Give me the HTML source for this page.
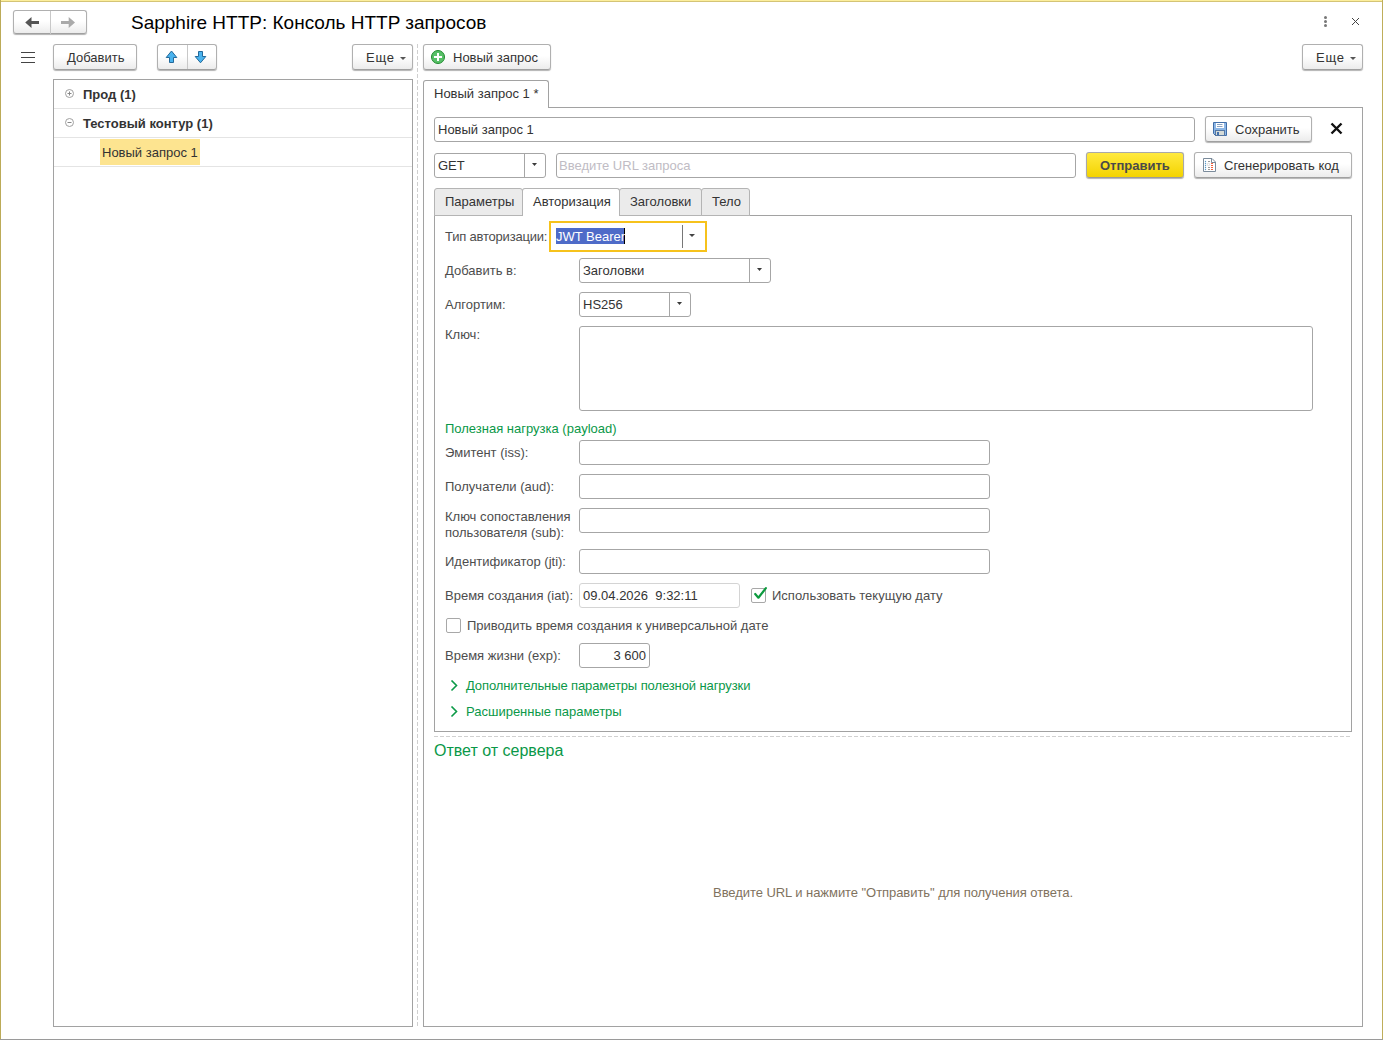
<!DOCTYPE html>
<html><head><meta charset="utf-8">
<style>
*{box-sizing:border-box;margin:0;padding:0}
html,body{width:1383px;height:1040px;overflow:hidden;background:#fff}
body{position:relative;font-family:"Liberation Sans",sans-serif;font-size:13px;color:#333}
.a{position:absolute}
.t{position:absolute;white-space:nowrap;line-height:16px;padding-top:1px}
.btn{position:absolute;height:26px;border:1px solid #b0b0b0;border-bottom-color:#a0a0a0;border-radius:3px;background:linear-gradient(#fff 0%,#fff 45%,#ececec 100%);box-shadow:0 1px 1px rgba(0,0,0,.3)}
.inp{position:absolute;height:25px;border:1px solid #a6a6a6;border-radius:3px;background:#fff}
.lbl{position:absolute;white-space:nowrap;line-height:16px;color:#4d4d4d;padding-top:1px}
.grn{color:#0a9848}
.dd{position:absolute;top:0;bottom:0;width:21px;border-left:1px solid #a6a6a6}
.dd:after{content:"";position:absolute;left:7px;top:9px;width:5px;height:3px;background:#3a3a3a;clip-path:polygon(0 0,100% 0,50% 100%)}
.tri{position:absolute;width:0;height:0;border-left:3px solid transparent;border-right:3px solid transparent;border-top:3px solid #555}
</style></head><body>
<!-- window frame -->
<div class="a" style="left:0;top:0;width:1383px;height:1px;background:#fcee9c"></div><div class="a" style="left:0;top:1px;width:1383px;height:1px;background:#d4c476"></div>
<div class="a" style="left:0;top:0;width:1px;height:1040px;background:#bcab58"></div>
<div class="a" style="left:1382px;top:0;width:1px;height:1040px;background:#bfae5a"></div>
<div class="a" style="left:0;top:1039px;width:1383px;height:1px;background:#9a9a9a"></div>

<!-- header -->
<div class="btn" style="left:13px;top:10px;width:74px;height:24px"></div>
<div class="a" style="left:50px;top:11px;width:1px;height:23px;background:#c8c8c8"></div>
<svg class="a" style="left:24px;top:16px" width="16" height="13" viewBox="0 0 16 13"><path d="M1.2 6.5 L7.5 1 L7.5 5 L15 5 L15 8 L7.5 8 L7.5 12 Z" fill="#555"/></svg>
<svg class="a" style="left:60px;top:16px" width="16" height="13" viewBox="0 0 16 13"><path d="M15 6.5 L8.7 1 L8.7 5 L1 5 L1 8 L8.7 8 L8.7 12 Z" fill="#aaa"/></svg>
<div class="t" style="left:131px;top:11px;font-size:19px;line-height:22px;color:#000">Sapphire HTTP: Консоль HTTP запросов</div>
<svg class="a" style="left:1320px;top:14px" width="11" height="16"><circle cx="5.5" cy="3.4" r="1.5" fill="#777"/><circle cx="5.5" cy="7.4" r="1.5" fill="#777"/><circle cx="5.5" cy="11.5" r="1.5" fill="#777"/></svg>
<svg class="a" style="left:1351px;top:17px" width="10" height="10"><path d="M1 1L8 8M8 1L1 8" stroke="#444" stroke-width="1"/></svg>

<!-- toolbar -->
<div class="a" style="left:21px;top:52px;width:14px;height:1px;background:#444"></div>
<div class="a" style="left:21px;top:57px;width:14px;height:1px;background:#444"></div>
<div class="a" style="left:21px;top:62px;width:14px;height:1px;background:#444"></div>
<div class="btn" style="left:53px;top:44px;width:84px"><div class="t" style="left:13px;top:4px">Добавить</div></div>
<div class="btn" style="left:157px;top:44px;width:60px"></div>
<div class="a" style="left:187px;top:45px;width:1px;height:24px;background:#c8c8c8"></div>
<svg class="a" style="left:164px;top:49px" width="15" height="16" viewBox="0 0 15 16"><path d="M7.5 2 L12.8 8.5 L9.5 8.5 L9.5 13.5 L5.5 13.5 L5.5 8.5 L2.2 8.5 Z" fill="#4ab3ee" stroke="#23699a" stroke-width="1" stroke-linejoin="miter"/></svg><svg class="a" style="left:193px;top:49px" width="15" height="16" viewBox="0 0 15 16"><path d="M5.5 2.5 H9.5 V7.5 H12.8 L7.5 13.8 L2.2 7.5 H5.5 Z" fill="#4ab3ee" stroke="#23699a" stroke-width="1"/></svg>
<div class="btn" style="left:352px;top:44px;width:61px"><div class="t" style="left:13px;top:4px;letter-spacing:0.8px">Еще</div><div class="tri" style="left:47px;top:12px"></div></div>

<div class="a" style="left:417px;top:44px;width:1px;height:982px;background:repeating-linear-gradient(#cfcfcf 0 4px,transparent 4px 6px)"></div>

<!-- tree -->
<div class="a" style="left:53px;top:79px;width:360px;height:948px;border:1px solid #a2a2a2"></div>
<div class="a" style="left:54px;top:108px;width:358px;height:1px;background:#e4e4e4"></div>
<div class="a" style="left:54px;top:137px;width:358px;height:1px;background:#e4e4e4"></div>
<div class="a" style="left:54px;top:166px;width:358px;height:1px;background:#e4e4e4"></div>
<svg class="a" style="left:65px;top:89px" width="9" height="9"><circle cx="4.5" cy="4.5" r="4" fill="none" stroke="#a0a0a0"/><path d="M2.5 4.5H6.5M4.5 2.5V6.5" stroke="#888"/></svg>
<div class="t" style="left:83px;top:86px;font-weight:bold">Прод (1)</div>
<svg class="a" style="left:65px;top:118px" width="9" height="9"><circle cx="4.5" cy="4.5" r="4" fill="none" stroke="#a0a0a0"/><path d="M2.5 4.5H6.5" stroke="#888"/></svg>
<div class="t" style="left:83px;top:115px;font-weight:bold">Тестовый контур (1)</div>
<div class="a" style="left:100px;top:139px;width:100px;height:26px;background:#fde490"></div>
<div class="t" style="left:102px;top:144px">Новый запрос 1</div>

<!-- right -->
<div class="btn" style="left:423px;top:44px;width:128px"><svg class="a" style="left:7px;top:5px" width="14" height="14" viewBox="0 0 14 14"><circle cx="7" cy="7" r="6.5" fill="#58c068" stroke="#1f8b2e" stroke-width="1"/><rect x="3" y="6" width="8" height="2" fill="#fff"/><rect x="6" y="3" width="2" height="8" fill="#fff"/></svg><div class="t" style="left:29px;top:4px">Новый запрос</div></div>
<div class="btn" style="left:1302px;top:44px;width:61px"><div class="t" style="left:13px;top:4px;letter-spacing:0.8px">Еще</div><div class="tri" style="left:47px;top:12px"></div></div>

<div class="a" style="left:423px;top:107px;width:940px;height:920px;border:1px solid #a2a2a2"></div>
<div class="a" style="left:423px;top:80px;width:126px;height:28px;border:1px solid #a2a2a2;border-bottom:none;border-radius:3px 3px 0 0;background:#fff"></div>
<div class="t" style="left:434px;top:85px">Новый запрос 1 *</div>


<!-- form -->
<div class="inp" style="left:434px;top:117px;width:761px;height:25px"><div class="t" style="left:3px;top:3px">Новый запрос 1</div></div>
<div class="btn" style="left:1205px;top:116px;width:107px;height:26px">
<svg class="a" style="left:7px;top:5px" width="14" height="14" viewBox="0 0 14 14"><path d="M0.5 0.5H13.5V13.5H2.5L0.5 11.5Z" fill="#8cb6e6" stroke="#416ea8"/><rect x="3" y="1" width="8" height="5" fill="#fff"/><path d="M4 2.5H9.5M4 4.5H9.5" stroke="#8aa3c2" stroke-width="1"/><rect x="2.5" y="8.5" width="9" height="5" fill="#d6dbd7" stroke="#5577a3"/><rect x="4" y="10" width="2" height="3" fill="#4672ad"/></svg>
<div class="t" style="left:29px;top:4px">Сохранить</div></div>
<svg class="a" style="left:1330px;top:122px" width="13" height="13" viewBox="0 0 13 13"><path d="M1.5 1.5L11.5 11.5M11.5 1.5L1.5 11.5" stroke="#111" stroke-width="2.4"/></svg>

<div class="inp" style="left:434px;top:153px;width:112px;height:25px"><div class="t" style="left:3px;top:3px">GET</div><div class="dd" style="right:0"></div></div>
<div class="inp" style="left:556px;top:153px;width:520px;height:25px"><div class="t" style="left:2px;top:3px;color:#c0bcc4">Введите URL запроса</div></div>
<div class="btn" style="left:1086px;top:152px;width:98px;height:26px;border-color:#a9a9a9;border-bottom-color:#9a9a9a;background:linear-gradient(#ffea40,#f3d300)"><div class="t" style="left:13px;top:4px;font-weight:bold;color:#4a4a4a">Отправить</div></div>
<div class="btn" style="left:1194px;top:152px;width:158px;height:26px">
<svg class="a" style="left:8px;top:5px" width="13" height="15" viewBox="0 0 13 15"><path d="M0.5 0.5H9L12.5 4V13.5H0.5Z" fill="#fff" stroke="#7b8b9b"/><path d="M8.5 0.5V4.5H12.5" fill="none" stroke="#7b8b9b"/><g fill="#5b9bc9"><circle cx="2.5" cy="3.5" r=".7"/><circle cx="2.5" cy="5.5" r=".7"/><circle cx="2.5" cy="7.5" r=".7"/><circle cx="2.5" cy="9.5" r=".7"/><circle cx="2.5" cy="11.5" r=".7"/></g><path d="M5 3.5H7M5 9.5H7M5 11.5H7" stroke="#9a9a9a"/><circle cx="5.5" cy="6.5" r="1.2" fill="none" stroke="#d0d0d0" stroke-width=".8"/><path d="M8 5.5H10M8 7.5H10M8 9.5H10M8 11.5H10" stroke="#f2613f"/></svg>
<div class="t" style="left:29px;top:4px">Сгенерировать код</div></div>

<!-- inner tabs -->
<div class="a" style="left:434px;top:215px;width:918px;height:517px;border:1px solid #a2a2a2"></div>
<div class="a" style="left:434px;top:188px;width:89px;height:28px;border:1px solid #b4b4b4;border-radius:3px 3px 0 0;background:#ebebeb"></div>
<div class="t" style="left:445px;top:193px">Параметры</div>
<div class="a" style="left:619px;top:188px;width:83px;height:28px;border:1px solid #b4b4b4;border-radius:3px 3px 0 0;background:#ebebeb"></div>
<div class="t" style="left:630px;top:193px">Заголовки</div>
<div class="a" style="left:701px;top:188px;width:49px;height:28px;border:1px solid #b4b4b4;border-radius:3px 3px 0 0;background:#ebebeb"></div>
<div class="t" style="left:712px;top:193px">Тело</div>
<div class="a" style="left:522px;top:188px;width:98px;height:28px;border:1px solid #b4b4b4;border-bottom:none;border-radius:3px 3px 0 0;background:#fff"></div>
<div class="t" style="left:533px;top:193px">Авторизация</div>

<div class="lbl" style="left:445px;top:228px;letter-spacing:-0.2px">Тип авторизации:</div>
<div class="a" style="left:549px;top:221px;width:158px;height:31px;border:2px solid #f6c21c;background:#fff"></div>
<div class="a" style="left:682px;top:225px;width:1px;height:23px;background:#777"></div>
<div class="tri" style="left:689px;top:234px;border-top-color:#444"></div>
<div class="a" style="left:556px;top:228px;width:69px;height:16px;background:#4e6bc8"></div>
<div class="a" style="left:624px;top:228px;width:1px;height:16px;background:#000"></div>
<div class="t" style="left:556px;top:228px;color:#fff">JWT Bearer</div>

<div class="lbl" style="left:445px;top:262px">Добавить в:</div>
<div class="inp" style="left:579px;top:258px;width:192px;height:25px"><div class="t" style="left:3px;top:3px">Заголовки</div><div class="dd" style="right:0"></div></div>
<div class="lbl" style="left:445px;top:296px">Алгортим:</div>
<div class="inp" style="left:579px;top:292px;width:112px;height:25px"><div class="t" style="left:3px;top:3px">HS256</div><div class="dd" style="right:0"></div></div>
<div class="lbl" style="left:445px;top:326px">Ключ:</div>
<div class="inp" style="left:579px;top:326px;width:734px;height:85px"></div>

<div class="t grn" style="left:445px;top:420px">Полезная нагрузка (payload)</div>
<div class="lbl" style="left:445px;top:444px">Эмитент (iss):</div>
<div class="inp" style="left:579px;top:440px;width:411px"></div>
<div class="lbl" style="left:445px;top:478px">Получатели (aud):</div>
<div class="inp" style="left:579px;top:474px;width:411px"></div>
<div class="lbl" style="left:445px;top:508px">Ключ сопоставления<br>пользователя (sub):</div>
<div class="inp" style="left:579px;top:508px;width:411px"></div>
<div class="lbl" style="left:445px;top:553px">Идентификатор (jti):</div>
<div class="inp" style="left:579px;top:549px;width:411px"></div>
<div class="lbl" style="left:445px;top:587px">Время создания (iat):</div>
<div class="inp" style="left:579px;top:583px;width:161px;border-color:#d4d4d4"><div class="t" style="left:3px;top:3px">09.04.2026&nbsp; 9:32:11</div></div>
<div class="a" style="left:751px;top:588px;width:15px;height:15px;border:1px solid #a8a8a8;border-radius:2px;background:#fff"></div>
<svg class="a" style="left:752px;top:585px" width="16" height="16" viewBox="0 0 16 16"><path d="M3.2 9L6.4 12.7L13.9 3.1" fill="none" stroke="#0c9a3e" stroke-width="2.2" stroke-linecap="round" stroke-linejoin="round"/></svg>
<div class="lbl" style="left:772px;top:587px">Использовать текущую дату</div>
<div class="a" style="left:446px;top:618px;width:15px;height:15px;border:1px solid #a8a8a8;border-radius:2px;background:#fff"></div>
<div class="lbl" style="left:467px;top:617px">Приводить время создания к универсальной дате</div>
<div class="lbl" style="left:445px;top:647px">Время жизни (exp):</div>
<div class="inp" style="left:579px;top:643px;width:71px"><div class="t" style="right:3px;top:3px">3 600</div></div>
<svg class="a" style="left:449px;top:680px" width="10" height="13" viewBox="0 0 10 13"><path d="M2.5 0.5L7.5 5.5L2.5 10.5" fill="none" stroke="#0c9a48" stroke-width="1.6"/></svg>
<div class="t grn" style="left:466px;top:677px;letter-spacing:-0.1px">Дополнительные параметры полезной нагрузки</div>
<svg class="a" style="left:449px;top:706px" width="10" height="13" viewBox="0 0 10 13"><path d="M2.5 0.5L7.5 5.5L2.5 10.5" fill="none" stroke="#0c9a48" stroke-width="1.6"/></svg>
<div class="t grn" style="left:466px;top:703px">Расширенные параметры</div>

<div class="a" style="left:434px;top:736px;width:918px;height:1px;background:repeating-linear-gradient(90deg,#d0d0d0 0 4px,transparent 4px 6px)"></div>
<div class="t grn" style="left:434px;top:740px;font-size:16px;line-height:19px">Ответ от сервера</div>
<div class="t" style="left:434px;width:918px;text-align:center;top:884px;color:#7f725e;letter-spacing:-0.06px">Введите URL и нажмите "Отправить" для получения ответа.</div>

</body></html>
